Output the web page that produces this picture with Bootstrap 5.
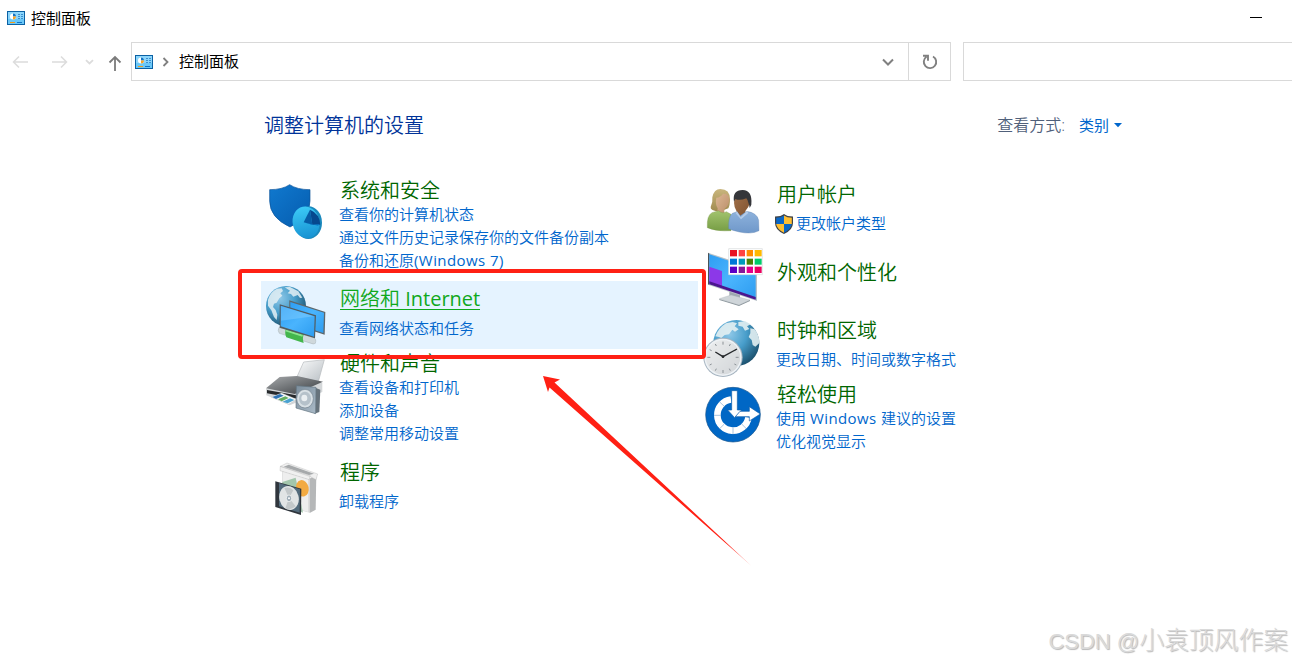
<!DOCTYPE html>
<html lang="zh-CN">
<head>
  <meta charset="UTF-8">
  <meta name="viewport" content="width=device-width, initial-scale=1.0">
  <title>控制面板</title>
  <link href="https://cdn.jsdelivr.net/npm/bootstrap@5.3.0/dist/css/bootstrap.min.css" rel="stylesheet">
  <style>
    body {
      font-family: "Open Sans", "Noto Sans CJK SC", sans-serif;
      font-size: 15px;
      font-weight: 400;
      line-height: 23px;
      color: #000;
      background: #fff;
    }
    .window { height: 662px; }
    .titlebar { height: 36px; padding-left: 7px; gap: 6px; }
    .minimize { width: 12px; height: 1px; background: #000; margin: 0 30px 2px 0; }
    .toolbar { height: 39px; margin-top: 6px; }
    .nav-arrows { width: 131px; }
    .address { width: 820px; border: 1px solid #d9d9d9; }
    .address-path { padding-left: 3px; }
    .address-path span { margin-left: 2px; }
    .address-path .drop { margin-right: 14px; }
    .refresh { width: 42px; border-left: 1px solid #d9d9d9; }
    .search-field { margin-left: 12px; border: 1px solid #d9d9d9; border-right: 0; }
    .page-head { margin: 32px 169px 0 264px; height: 26px; }
    .page-head h1 { font-size: 20px; line-height: 26px; color: #003399; font-weight: 350; }
    .view-opts { line-height: 23px; margin-bottom: 2px; }
    .view-label { font-size: 16px; font-weight: 350; color: #50607a; margin-right: 14px; }
    .view-value { color: #0066cc; }
    .categories { margin: 38px 0 0 261px; }
    .categories > div { width: 437px; }
    .category { padding-left: 3px; }
    .category svg.cat-icon { width: 62px; height: 62px; margin: 3px 13px 0 0; }
    .category h2 { font-size: 20px; line-height: 25px; font-weight: 350; color: #006600; margin: 1px 0 0 1px; }
    .category.single h2 { margin-bottom: 5px; }
    .category a { color: #0066cc; font-weight: 350; text-decoration: none; display: block; white-space: nowrap; }
    .category a span { font-weight: 400; letter-spacing: .42px; }
    .category.active-row { background: #e5f3ff; }
    .active-row h2 span { color: #10a81c; box-shadow: inset 0 -1px #10a81c; display: inline-block; height: 23px; line-height: 23px; vertical-align: top; }
    .active-row h2 b { font-weight: 400; }
    .h-security { height: 104px; }
    .h-network, .h-users { height: 68px; }
    .h-network > div { padding-top: 5px; }
    .h-users > div { padding-top: 4px; }
    .h-users .shield-row { margin-left: -1px; gap: 3px; }
    .h-hardware { height: 108px; }
    .h-hardware > div { padding-top: 1px; }
    .category.h-hardware .cat-icon { margin-top: 7px; }
    .h-programs > div { padding-top: 2px; }
    .category.h-programs .cat-icon, .category.h-look .cat-icon { margin-top: 1px; }
    .h-look { height: 69px; }
    .h-look > div { padding-top: 14px; }
    .h-clock { height: 66px; }
    .h-clock > div { padding-top: 3px; }
    .h-access > div { padding-top: 1px; }
    .category.h-access .cat-icon { margin-top: 4px; }
    .frame-red { left: 238px; top: 269px; width: 468px; height: 90px; border: 4px solid #ff2014; border-radius: 4px; }
    .arrow-red { left: 540px; top: 372px; }
    .watermark { right: 4px; bottom: 4px; font: 300 24.8px/32px "Liberation Sans", "Noto Sans CJK SC", sans-serif; color: #dadada; text-shadow: 1px 1px 1px #b8b8b8; }
    .watermark span { font-size: 22px; }
  </style>
</head>
<body>
  <svg width="0" height="0" class="position-absolute">
    <defs>
      <symbol id="panel" viewBox="0 0 18 14">
        <path fill="#0b61a4" d="M0 0h18v14H0z"/>
        <path fill="#8bd5fb" d="M1 1h16v12H1z"/>
        <path fill="#6ac7f7" d="M1 8h16v5H1z"/>
        <circle cx="6" cy="5.500" r="3" fill="#fff"/>
        <path fill="#1274c4" d="M6 5.500V2.500a3 3 0 0 1 3 3z"/>
        <path fill="#f7a428" d="M6 5.500h3a3 3 0 0 1-3 3z"/>
        <path fill="#3a8fd0" d="M11 3h2v1h-2zm3 0h2v1h-2zm-3 2h2v1h-2zm3 0h2v1h-2zm-3 2h2v1h-2zm3 0h2v1h-2z"/>
        <path fill="#f39b18" d="M3 11h5v1H3z"/>
        <path fill="#1274c4" d="M10 11h5v1h-5z"/>
      </symbol>
      <linearGradient id="gBlue" x1="0" y1="0" x2="1" y2="1"><stop offset="0" stop-color="#1079cf"/><stop offset="1" stop-color="#055cae"/></linearGradient>
      <linearGradient id="gPie" x1="0" y1="0" x2="0" y2="1"><stop offset="0" stop-color="#3bc9f6"/><stop offset="1" stop-color="#1792d2"/></linearGradient>
      <radialGradient id="gGlobe" cx=".35" cy=".3" r=".75"><stop offset="0" stop-color="#8fc8e8"/><stop offset=".5" stop-color="#479dca"/><stop offset="1" stop-color="#1b506d"/></radialGradient>
      <linearGradient id="gScreen" x1="0" y1="0" x2="1" y2="1"><stop offset="0" stop-color="#2e9ef3"/><stop offset=".5" stop-color="#4ab4fd"/><stop offset="1" stop-color="#2d9cf0"/></linearGradient>
      <linearGradient id="gMetal" x1="0" y1="0" x2="1" y2="1"><stop offset="0" stop-color="#fbfcfc"/><stop offset="1" stop-color="#b9bfc4"/></linearGradient>
      <linearGradient id="gDark" x1="0" y1="0" x2="1" y2="1"><stop offset="0" stop-color="#a8abad"/><stop offset="1" stop-color="#363a3e"/></linearGradient>
      <linearGradient id="gSpeaker" x1="0" y1="0" x2="1" y2="1"><stop offset="0" stop-color="#7c8e9d"/><stop offset="1" stop-color="#aabac7"/></linearGradient>
      <linearGradient id="gGreen" x1="0" y1="0" x2="0" y2="1"><stop offset="0" stop-color="#a3c46f"/><stop offset="1" stop-color="#779e45"/></linearGradient>
      <linearGradient id="gShirt" x1="0" y1="0" x2="0" y2="1"><stop offset="0" stop-color="#8eb2dc"/><stop offset="1" stop-color="#6f98ca"/></linearGradient>
      <linearGradient id="gHair" x1="0" y1="0" x2="0" y2="1"><stop offset="0" stop-color="#c9b67d"/><stop offset="1" stop-color="#a08a4f"/></linearGradient>
      <linearGradient id="gFace" x1="0" y1="0" x2="1" y2="1"><stop offset="0" stop-color="#dcb794"/><stop offset="1" stop-color="#b98c67"/></linearGradient>
      <linearGradient id="gFace2" x1="0" y1="0" x2="1" y2="1"><stop offset="0" stop-color="#a06f49"/><stop offset="1" stop-color="#7e512e"/></linearGradient>
      <linearGradient id="gTail" gradientUnits="userSpaceOnUse" x1="3" y1="4" x2="210" y2="192"><stop offset=".88" stop-color="#ff2014"/><stop offset="1" stop-color="#ff2014" stop-opacity=".4"/></linearGradient>
    </defs>
  </svg>

  <div class="window position-relative overflow-hidden">
    <header class="titlebar d-flex align-items-center">
      <svg width="18" height="14"><use href="#panel"/></svg>
      <span>控制面板</span>
      <div class="minimize ms-auto"></div>
    </header>

    <div class="toolbar d-flex">
      <svg class="nav-arrows flex-shrink-0" height="39" fill="none" stroke="#dcdcdc" stroke-width="1.5">
        <path d="M28 20H13.500M19 14.500L13.500 20l5.500 5.500M52 20h14.500M61 14.500l5.500 5.500-5.500 5.500"/>
        <path stroke-width="1.800" d="M86 18.200l3.500 3.300 3.500-3.300"/>
        <path stroke="#7b7b7b" stroke-width="1.800" d="M115 29V15M109.500 20.500L115 15l5.500 5.500"/>
      </svg>
      <div class="address d-flex flex-shrink-0">
        <div class="address-path d-flex align-items-center flex-grow-1">
          <svg width="18" height="14"><use href="#panel"/></svg>
          <svg class="ms-2" width="8" height="10" fill="none" stroke="#808080" stroke-width="1.800"><path d="M2.500 1l4 4-4 4"/></svg>
          <span class="ps-2">控制面板</span>
          <svg class="drop ms-auto" width="12" height="8" fill="none" stroke="#808080" stroke-width="2"><path d="M1 1.500l5 5 5-5"/></svg>
        </div>
        <div class="refresh d-flex align-items-center justify-content-center">
          <svg width="16" height="16" fill="none" stroke="#808080" stroke-width="1.900"><path d="M11 2.500A6.200 6.200 0 1 1 4.500 2.800M1 1.800h5v5"/></svg>
        </div>
      </div>
      <div class="search-field flex-grow-1"></div>
    </div>

    <div class="page-head d-flex align-items-center">
      <h1 class="mb-0">调整计算机的设置</h1>
      <div class="view-opts d-flex align-items-center ms-auto">
        <span class="view-label">查看方式:</span>
        <span class="view-value">类别</span>
        <svg class="ms-1" width="10" height="5"><path fill="#0066cc" d="M1 0h8L5 4.200z"/></svg>
      </div>
    </div>

    <main class="categories d-flex">
      <div>
        <section class="category h-security d-flex align-items-start">
          <svg class="cat-icon" viewBox="27 30 186 186">
            <path fill="url(#gBlue)" stroke="#0a5298" stroke-width="2" d="M44 59q38 0 60-15 22 15 61 15v34q0 50-60 78-61-28-61-78z"/>
            <ellipse cx="160" cy="158" rx="41" ry="49" fill="#1a89bd"/>
            <ellipse cx="153" cy="157" rx="40" ry="48" fill="url(#gPie)" transform="rotate(-12 153 157)"/>
            <path fill="#075da7" d="M165 119l7 45-26-7z"/>
            <path fill="#06488e" d="M165 119q29 12 31 45l-24 0z"/>
            <path fill="#0878c8" d="M146 157l26 7 22-1-5 4z"/>
          </svg>
          <div>
            <h2>系统和安全</h2>
            <a href="#">查看你的计算机状态</a>
            <a href="#">通过文件历史记录保存你的文件备份副本</a>
            <a href="#">备份和还原<span>(Windows 7)</span></a>
          </div>
        </section>

        <section class="category single active-row h-network d-flex align-items-start">
          <svg class="cat-icon" viewBox="87 57 186 186">
            <circle cx="153" cy="123" r="60" fill="url(#gGlobe)"/>
            <path fill="#e4f0f4" d="M99 105q6-24 27-34l14-1 4 8-8 7 6 7-9 8-8 13-8 3-3 10 8 9 5 14-2 16-8-9-8-20-10-14zM149 67l16-1 25 13 12 19-7 1-7-9-13 5-7-8-10-2 7-8z" opacity=".85"/>
            <path fill="#5d666a" d="M163 106l108 35-2 68-106-34z"/>
            <path fill="url(#gScreen)" d="M166 111l101 32-2 61-99-32z"/>
            <path fill="#cfd8dc" stroke="#8d989c" d="M132 187l105 31q8 5 4 17-5 3-10 1l-98-31q-6-8-1-18z"/>
            <path fill="#43b64c" d="M153 190l54 17q-6 11-1 27l-52-17q-6-12-1-27z"/>
            <path fill="#8ae38d" d="M154 194l50 15-2 6-51-16z"/>
            <path fill="#525b5f" d="M134 118l109 33-3 69-106-32z"/>
            <path fill="url(#gScreen)" d="M137 122l102 32-2 61-100-31z"/>
            <path fill="#8cd2ff" opacity=".4" d="M138 123l98 31-98 13z"/>
          </svg>
          <div>
            <h2><span>网络和 <b>Internet</b></span></h2>
            <a href="#">查看网络状态和任务</a>
          </div>
        </section>

        <section class="category h-hardware d-flex align-items-start">
          <svg class="cat-icon" viewBox="27 18 186 186">
            <path fill="url(#gMetal)" stroke="#b5b9bc" stroke-width="2" d="M126 80l20-44 62-7-18 66z"/>
            <path fill="#d4d7d9" d="M33 116l1 20 70 30 98-40V98z"/>
            <path fill="url(#gDark)" d="M33 115l41-34 52-3 78 17-85 37z"/>
            <path fill="#26292c" d="M36 120l88 16v10l-88-16z"/>
            <path fill="#f6f8f8" stroke="#bbb" d="M48 141l32-12 45 19-24 15z"/>
            <path fill="#2d73b5" d="M52 141l23-9 11 5-23 10z"/>
            <path fill="#63ad61" d="M69 148l22-9 10 5-21 10z"/>
            <path fill="#49a2d1" d="M83 155l22-10 13 5-20 10z"/>
            <path fill="#67737c" d="M181 113l15 6-3 67-15 5z"/>
            <path fill="url(#gSpeaker)" stroke="#627480" stroke-width="2" d="M124 107l59 5-1 79-59-17z"/>
            <ellipse cx="150" cy="146" rx="25" ry="28" fill="#d8e0e5" stroke="#72828e" stroke-width="2"/>
            <ellipse cx="150" cy="146" rx="18" ry="21" fill="#b5c1ca"/>
            <ellipse cx="148" cy="144" rx="9" ry="10" fill="#e9eef1"/>
          </svg>
          <div>
            <h2>硬件和声音</h2>
            <a href="#">查看设备和打印机</a>
            <a href="#">添加设备</a>
            <a href="#">调整常用移动设置</a>
          </div>
        </section>

        <section class="category single h-programs d-flex align-items-start">
          <svg class="cat-icon" viewBox="27 24 186 186">
            <path fill="#d5d6d6" d="M82 58l82 22v108l-82-22z"/>
            <path fill="#eee" d="M84 62l76 21v103l-76-22z"/>
            <path fill="#b5b7b8" d="M164 86l20-13-2 106-18 10z"/>
            <path fill="#a3c6ac" d="M82 96l40-13 22 105-62-27z"/>
            <ellipse cx="142" cy="115" rx="19" ry="25" fill="#f2aa42" transform="rotate(-12 142 115)"/>
            <path fill="#8a8c8d" d="M86 54l78 22-2 12-78-24z"/>
            <path fill="#f0f0f0" stroke="#aaa" d="M76 49l20-10 92 33-5 17-17-9zM76 49l90 28-3 12-88-27z"/>
            <path fill="#a6a9ab" d="M86 50l15-6 76 27-15 4z"/>
            <path fill="#30363d" d="M61 94l78 22-1 79-77-24z"/>
            <path fill="#536b7c" d="M72 99l63 19-1 70-62-19z"/>
            <ellipse cx="102" cy="144" rx="29" ry="36" fill="#e1e4e5" transform="rotate(-14 102 144)"/>
            <path fill="#c3c8ca" d="M102 144l-14-30q18-5 27 7zM102 144l20 25q-15 14-31 6z"/>
            <ellipse cx="102" cy="145" rx="8" ry="10" fill="#9dabb5" stroke="#fff" stroke-width="2"/>
            <circle cx="102" cy="145" r="3" fill="#fff"/>
          </svg>
          <div>
            <h2>程序</h2>
            <a href="#">卸载程序</a>
          </div>
        </section>
      </div>

      <div>
        <section class="category single h-users d-flex align-items-start">
          <svg class="cat-icon" viewBox="18 15 186 186">
            <path fill="url(#gHair)" d="M76 42q29 0 29 31 0 18-5 27l-27 10q-28-3-26-14 7-13 5-29 5-25 24-25z"/>
            <path fill="url(#gFace)" d="M84 56q17-1 19 16-1 21-15 30v16l-22 2 2-20q-8-13-4-32 13-1 20-12z"/>
            <path fill="url(#gGreen)" stroke="#729344" d="M37 158q-2-37 14-45l20-6q12 11 23 3l14 8v49q-42 3-71-9z"/>
            <path fill="url(#gFace2)" d="M122 58h42q7 30-13 50l2 13-19 9-11-25q-11-19-1-47z"/>
            <path fill="#35363a" d="M117 80q-6-34 26-35 30 1 26 44l-5 10q-1-10-4-16-2-9-6-13-20 8-33 2z"/>
            <path fill="url(#gShirt)" stroke="#5d81ad" d="M101 161q-2-35 11-46l14-5 10 12 19-13q31 4 36 27l1 31q-22 12-59 4-21-5-32-10z"/>
            <path fill="#b4cbe8" d="M126 109l11 18 19-19 4 6-22 19-16-18z"/>
          </svg>
          <div>
            <h2>用户帐户</h2>
            <div class="shield-row d-flex align-items-center">
              <svg width="18" height="20" viewBox="0 0 18 20">
                <path fill="#3f4348" d="M9 0q3 2.500 9 2.500V9q0 7-9 11Q0 16 0 9V2.500Q6 2.500 9 0z"/>
                <path fill="#0b67c6" d="M9 1.500V10H1.200V3.700Q6 3.700 9 1.500zM9 10h7.800q-.5 5-7.800 8.700z"/>
                <path fill="#ffbf32" d="M9 1.500q3 2.200 7.800 2.200V10H9zM9 10H1.200Q1.700 15 9 18.700z"/>
              </svg>
              <a href="#">更改帐户类型</a>
            </div>
          </div>
        </section>

        <section class="category h-look d-flex align-items-start">
          <svg class="cat-icon" viewBox="33 18 186 186">
            <path fill="#9fa9b0" d="M118 153l32 9v24h-32z"/>
            <path fill="#cfd5d9" stroke="#a7afb5" d="M88 176l35-11 57 15-33 16z"/>
            <path fill="#8e989e" d="M88 177l59 18 33-15v3l-33 15-59-18z"/>
            <path fill="#b9c2c8" d="M54 38l147 49v96L54 134z"/>
            <path fill="#485157" d="M54 38l4 3v93l-4-1z"/>
            <path fill="url(#gScreen)" d="M58 43l139 46v88L58 130z"/>
            <path fill="#8c38e8" d="M58 80l38 13v49l-38-12z"/>
            <path fill="#4b168f" d="M58 124l139 47v8L58 133z"/>
            <path fill="#fff" stroke="#d6d9db" stroke-width="2" d="M116 26h101v78H116z"/>
            <path fill="#e81224" d="M120 30h21v19h-21z"/><path fill="#ff4343" d="M146 30h19v19h-19z"/><path fill="#ff8c00" d="M170 30h19v19h-19z"/><path fill="#ffb900" d="M194 30h21v19h-21z"/>
            <path fill="#0078d7" d="M120 56h21v18h-21z"/><path fill="#0099bc" d="M146 56h19v18h-19z"/><path fill="#498205" d="M170 56h19v18h-19z"/><path fill="#00cc6a" d="M194 56h21v18h-21z"/>
            <path fill="#5b00c5" d="M120 80h21v19h-21z"/><path fill="#881798" d="M146 80h19v19h-19z"/><path fill="#e3008c" d="M170 80h19v19h-19z"/><path fill="#ea005e" d="M194 80h21v19h-21z"/>
          </svg>
          <div>
            <h2>外观和个性化</h2>
          </div>
        </section>

        <section class="category single h-clock d-flex align-items-start">
          <svg class="cat-icon" viewBox="33 21 186 186">
            <circle cx="139" cy="99" r="69" fill="url(#gGlobe)"/>
            <path fill="#e3eff2" opacity=".9" d="M76 79q10-25 32-39l20-4 13 4-7 9 12 9-11 7-8-6-10 14-13 2-10 9-7-3zM145 36l20-3 17 10-11 6 7 8-13 5-7-12-13-3zM181 55l13 3q15 20 14 41l-12 11-8-5-3-15-9-9 5-11z"/>
            <circle cx="99" cy="142" r="59" fill="#a6b4c0"/>
            <circle cx="99" cy="142" r="56" fill="#eef2f5"/>
            <circle cx="99" cy="142" r="51" fill="url(#gMetal)"/>
            <circle cx="99" cy="142" r="51" fill="#e2e4e6" opacity=".6"/>
            <path stroke="#8b9196" stroke-width="3" d="M99 95v9M99 180v9M52 142h9M137 142h9M76 102l3 6M121 102l-3 6M59 119l6 3M139 119l-6 3M59 165l6-3M139 165l-6-3M76 182l3-6M121 182l-3-6"/>
            <path stroke="#25282b" stroke-width="4" fill="none" d="M76 126l23 14 42-23"/>
            <circle cx="99" cy="140" r="4" fill="#25282b"/>
          </svg>
          <div>
            <h2>时钟和区域</h2>
            <a href="#">更改日期、时间或数字格式</a>
          </div>
        </section>

        <section class="category h-access d-flex align-items-start">
          <svg class="cat-icon" viewBox="33 18 186 186">
            <circle cx="129" cy="110" r="82" fill="#0067c5" stroke="#17548c" stroke-width="2"/>
            <path fill="none" stroke="#fff" stroke-width="20" d="M123 64.400a47 47 0 1 0 52.500 54"/>
            <path stroke="#7fa6cc" stroke-width="2" d="M103 85L88 71M92 112H72M103 138l-14 14M129 149v20M155 138l14 14"/>
            <path fill="#fff" stroke="#0d5dab" stroke-width="2" d="M125 38h17v58h13l-21 23-21-23h12z"/>
            <path fill="#fff" stroke="#0d5dab" stroke-width="2" d="M150 100h28V86l33 22-33 21v-13h-42z"/>
          </svg>
          <div>
            <h2>轻松使用</h2>
            <a href="#">使用 <span>Windows </span>建议的设置</a>
            <a href="#">优化视觉显示</a>
          </div>
        </section>
      </div>
    </main>

    <div class="frame-red position-absolute"></div>
    <svg class="arrow-red position-absolute" width="214" height="196">
      <path fill="url(#gTail)" d="M3 4l17 3.500-5.500 3L211.500 194 9.500 15.500 8 20z"/>
    </svg>
    <div class="watermark position-absolute"><span>CSDN @</span>小袁顶风作案</div>
  </div>

  <script src="https://cdn.jsdelivr.net/npm/bootstrap@5.3.0/dist/js/bootstrap.bundle.min.js"></script>
</body>
</html>
